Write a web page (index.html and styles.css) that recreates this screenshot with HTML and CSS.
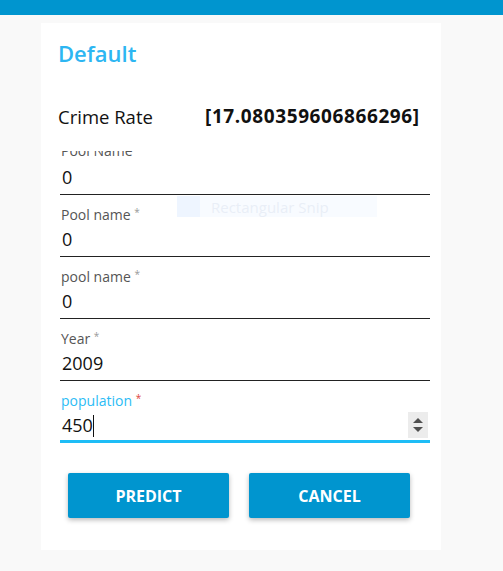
FILE: index.html
```html
<!DOCTYPE html>
<html>
<head>
<meta charset="utf-8">
<link rel="stylesheet" href="styles.css">
</head>
<body>
<div class="topbar"></div>
<div class="page">
  <div class="card">
    <h1 class="title">Default</h1>
    <div class="result">
      <span class="result-label">Crime Rate</span>
      <span class="result-value">[17.080359606866296]</span>
    </div>
    <div class="scroller">
      <div class="fields">
        <div class="field">
          <label class="field-label">Pool Name</label>
          <div class="field-input">0</div>
        </div>
        <div class="field">
          <label class="field-label">Pool name <span class="req">*</span></label>
          <div class="field-input">0</div>
        </div>
        <div class="field">
          <label class="field-label">pool name <span class="req">*</span></label>
          <div class="field-input">0</div>
        </div>
        <div class="field">
          <label class="field-label">Year <span class="req">*</span></label>
          <div class="field-input">2009</div>
        </div>
        <div class="field field-focus">
          <label class="field-label">population <span class="req">*</span></label>
          <div class="field-input">450<span class="caret"></span>
            <span class="spinner">
              <svg width="20" height="26" viewBox="0 0 20 26"><rect width="20" height="26" fill="#ececec"/><path d="M5 11 L10 6 L15 11 Z" fill="#505050"/><path d="M5 15 L15 15 L10 20 Z" fill="#505050"/></svg>
            </span>
          </div>
        </div>
      </div>
    </div>
    <div class="actions">
      <button class="btn">PREDICT</button>
      <button class="btn">CANCEL</button>
    </div>
    <div class="snip"><span class="snip-dot"></span><span class="snip-text">Rectangular Snip</span></div>
  </div>
</div>
</body>
</html>
```

FILE: styles.css
```css
html, body {
  margin: 0;
  padding: 0;
  background: #f9f9f9;
  font-family: "Open Sans", "Noto Sans", sans-serif;
}
.topbar {
  height: 15px;
  background: #0095cf;
}
.page {
  padding: 8px 0 0 41px;
}
.card {
  position: relative;
  width: 400px;
  height: 527px;
  background: #fff;
  box-sizing: border-box;
  padding: 0 11px 0 17px;
}
.title {
  margin: 0;
  padding-top: 14px;
  font-size: 22px;
  line-height: 32px;
  font-weight: 600;
  color: #2db6f2;
}
.result {
  display: flex;
  margin-top: 32px;
  height: 30px;
  align-items: center;
  font-size: 18.5px;
  color: #111;
}
.result-label {
  width: 147px;
}
.result-value {
  font-weight: 700;
  font-size: 19px;
  letter-spacing: 0.6px;
}
.scroller {
  margin-top: 20px;
  margin-left: 2px;
  height: 293px;
  overflow: hidden;
}
.fields {
  margin-top: -18px;
}
.field {
  padding-top: 7px;
}
.field-label {
  display: block;
  height: 21px;
  line-height: 21px;
  font-size: 14px;
  color: #555;
  padding-left: 1px;
}
.req {
  font-size: 10px;
  color: #999;
  vertical-align: 4px;
}
.field-input {
  position: relative;
  height: 33px;
  line-height: 33px;
  font-size: 18px;
  color: #111;
  padding-left: 2px;
  border-bottom: 1px solid #222;
}
.field-focus .field-label {
  color: #2cbcf5;
}
.field-focus .req {
  color: #e0443c;
}
.field-focus .field-input {
  height: 31px;
  border-bottom: 3px solid #1ebdf6;
}
.caret {
  display: inline-block;
  width: 1px;
  height: 22px;
  background: #111;
  vertical-align: -5px;
}
.spinner {
  position: absolute;
  right: 2px;
  top: 3px;
  display: flex;
}
.actions {
  display: flex;
  gap: 20px;
  margin-top: 29px;
  padding-left: 10px;
}
.btn {
  width: 161px;
  height: 45px;
  border: none;
  border-radius: 2px;
  background: #0095cf;
  color: #fff;
  font-family: "Open Sans", "Noto Sans", sans-serif;
  font-weight: 700;
  font-size: 16px;
  box-shadow: 0 2px 5px rgba(0,0,0,0.28);
}
.snip {
  position: absolute;
  left: 136px;
  top: 173px;
  width: 200px;
  height: 21px;
  background: rgba(240,246,255,0.45);
  display: flex;
  align-items: center;
}
.snip-dot {
  width: 23px;
  height: 21px;
  background: rgba(232,242,255,0.6);
  position: relative;
}
.snip-text {
  margin-left: 11px;
  font-size: 15px;
  color: rgba(220,228,240,0.55);
}
```
